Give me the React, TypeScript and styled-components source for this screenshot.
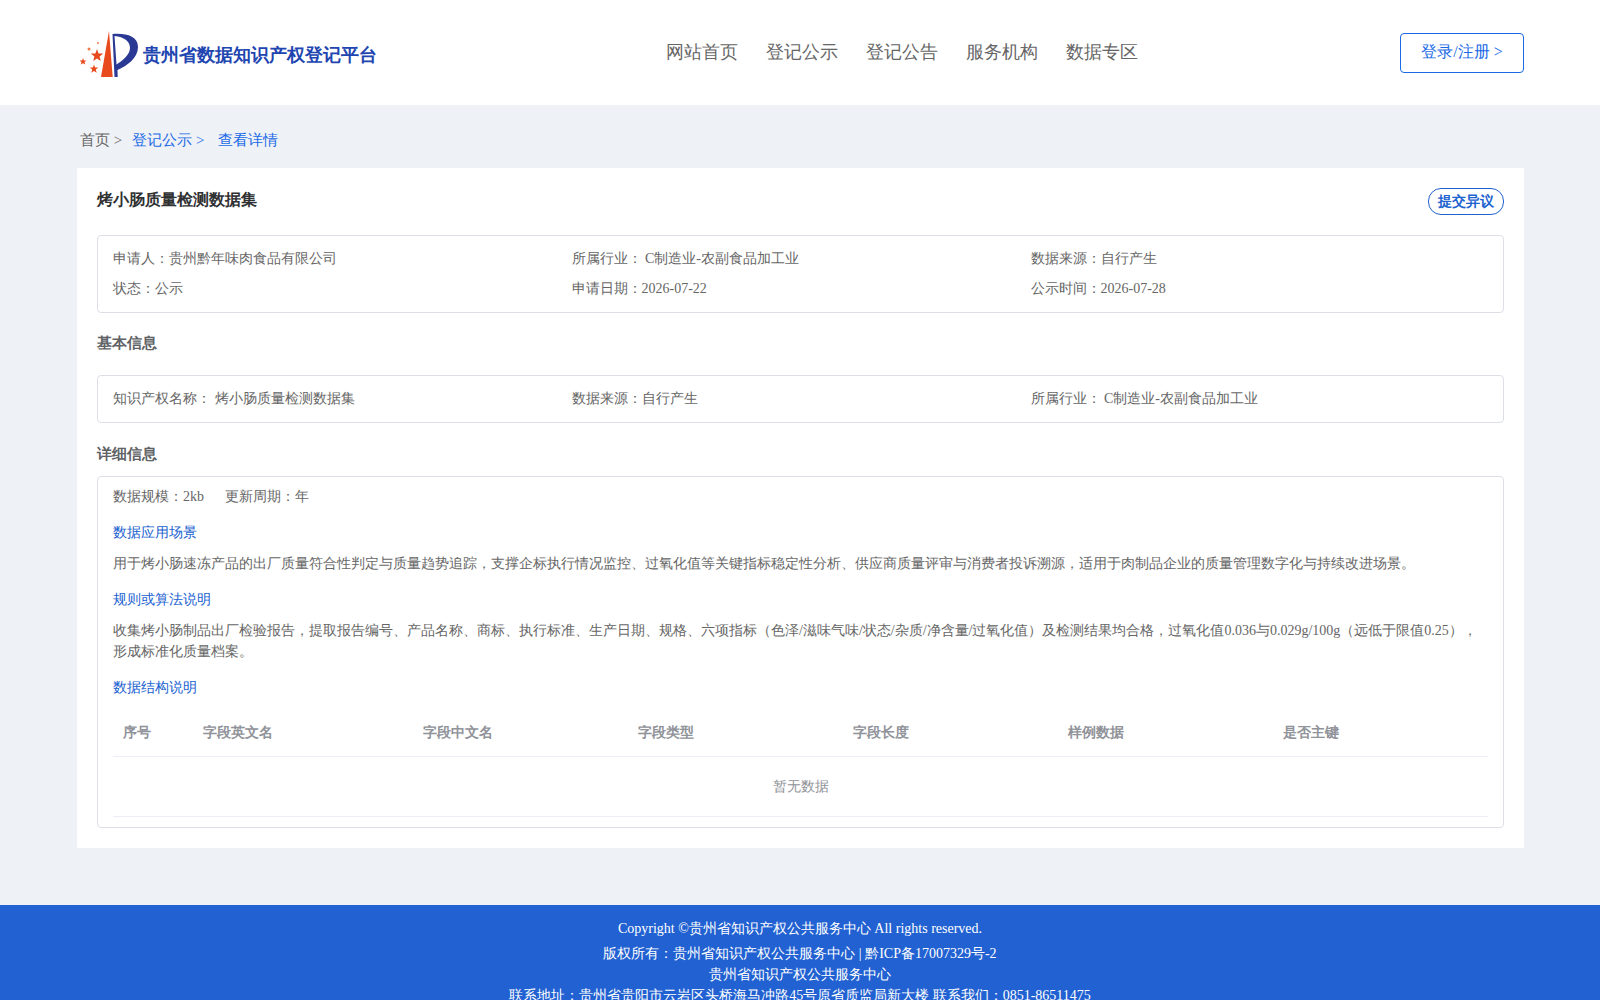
import React from "react";
import styled, { createGlobalStyle } from "styled-components";

const Global = createGlobalStyle`
  html, body { margin: 0; padding: 0; background: #eef1f5; }
  body { font-family: "Liberation Serif", serif; font-size: 14px; color: #666; }
  * { box-sizing: border-box; }
  p, h1, h2, h3 { margin: 0; }
`;

const Header = styled.header`
  height: 105px;
  background: #fff;
  padding: 0 76px 0 80px;
  display: flex;
  align-items: center;
`;
const Brand = styled.div`
  display: flex;
  align-items: center;
  gap: 5px;
  margin-top: 2px;
`;
const BrandName = styled.h1`
  font: bold 18px/24px "Liberation Sans", sans-serif;
  color: #2145b0;
  margin-top: 3px;
`;
const Nav = styled.nav`
  display: flex;
  gap: 28px;
  margin-left: 289px;
  margin-bottom: 1px;
`;
const NavItem = styled.a`
  font-size: 18px;
  line-height: 24px;
  color: #666;
`;
const LoginButton = styled.button`
  width: 124px;
  height: 40px;
  margin-left: auto;
  border: 1px solid #1a6ae6;
  border-radius: 4px;
  background: #fff;
  color: #1a6ae6;
  font: 16px "Liberation Serif", serif;
  padding: 0;
`;
const Main = styled.main`
  padding: 0 76px 0 77px;
`;
const Crumbs = styled.div`
  height: 63px;
  display: flex;
  align-items: center;
  padding: 8px 0 0 3px;
  font-size: 15px;
`;
const Crumb = styled.span<{ $active?: boolean; $gap?: number }>`
  color: ${(p) => (p.$active ? "#1a6ae6" : "#666")};
  margin-right: ${(p) => p.$gap ?? 0}px;
`;
const Card = styled.section`
  background: #fff;
  padding: 20px 20px 20px;
`;
const TitleRow = styled.div`
  display: flex;
  justify-content: space-between;
  align-items: flex-start;
  height: 47px;
`;
const Title = styled.h2`
  font: bold 16px/24px "Liberation Sans", sans-serif;
  color: #303133;
`;
const ObjectButton = styled.button`
  width: 76px;
  height: 27px;
  border: 1px solid #2061d0;
  border-radius: 13px;
  background: #fff;
  color: #2061d0;
  font: bold 14px "Liberation Sans", sans-serif;
  padding: 0;
`;
const Box = styled.div`
  border: 1px solid #dcdfe6;
  border-radius: 4px;
  padding: 0 15px;
`;
const InfoGrid = styled.div`
  display: grid;
  grid-template-columns: 458.5px 459px 1fr;
  padding: 8px 0;
`;
const InfoCell = styled.div`
  height: 30px;
  line-height: 30px;
`;
const SectionTitle = styled.h3`
  font: bold 15px/20px "Liberation Sans", sans-serif;
  color: #606266;
  margin: 20px 0 22px;
`;
const DetailTitle = styled(SectionTitle)`
  margin: 21px 0 12px;
`;
const MetaRow = styled.div`
  display: flex;
  gap: 21px;
  height: 20px;
  line-height: 20px;
  margin-top: 10px;
`;
const SubHead = styled.div`
  color: #2061d0;
  line-height: 20px;
  margin-top: 16px;
`;
const Para = styled.p`
  line-height: 21px;
  margin-top: 10px;
`;
const Table = styled.div`
  margin-top: 12px;
  padding-bottom: 10px;
`;
const Row = styled.div`
  display: grid;
  grid-template-columns: 80px 220px 215px 215px 215px 215px 1fr;
  height: 47px;
  align-items: center;
  border-bottom: 1px solid #ebeef5;
`;
const Th = styled.div`
  font: bold 14px "Liberation Sans", sans-serif;
  color: #909399;
  padding-left: 10px;
`;
const Empty = styled.div`
  height: 60px;
  line-height: 60px;
  text-align: center;
  color: #909399;
  border-bottom: 1px solid #ebeef5;
`;
const Footer = styled.footer`
  margin-top: 57px;
  background: #2161d2;
  color: #fff;
  text-align: center;
  padding: 14px 0 20px;
`;
const FooterLine = styled.div`
  line-height: 21px;
`;
const FooterCopy = styled(FooterLine)`
  line-height: 20px;
  margin-bottom: 4px;
`;

const Logo = () => (
  <svg width="58" height="52" viewBox="0 0 58 52" aria-hidden="true">
    <path d="M29 3 L32.7 49 L21 49 Z" fill="#e8491d" />
    <path
      fillRule="evenodd"
      d="M32.5 6 C46 5 58 8 58 19 C58 30 47 38 37.5 42 L37.7 49 L34.5 49 Z M34.5 8 C44 9 50 13 50 20 C50 27 42 33 36.5 36.5 Z"
      fill="#2a3a94"
    />
    <path d="M17 21 l1.6 4.4 4.6 .2 -3.6 2.9 1.2 4.5 -3.8 -2.6 -3.8 2.6 1.2 -4.5 -3.6 -2.9 4.6 -.2 Z" fill="#e8491d" />
    <path d="M3 30 l.9 2.4 2.6 .1 -2 1.6 .7 2.5 -2.2 -1.4 -2.2 1.4 .7 -2.5 -2 -1.6 2.6 -.1 Z" fill="#e8491d" />
    <path d="M14 36.5 l1.1 3 3.2 .1 -2.5 2 .9 3.1 -2.7 -1.8 -2.7 1.8 .9 -3.1 -2.5 -2 3.2 -.1 Z" fill="#e8491d" />
    <circle cx="9" cy="21" r="1.5" fill="#ef7a4a" />
    <circle cx="18" cy="15" r="1" fill="#ef7a4a" />
  </svg>
);

const navItems = ["网站首页", "登记公示", "登记公告", "服务机构", "数据专区"];
const headers = ["序号", "字段英文名", "字段中文名", "字段类型", "字段长度", "样例数据", "是否主键"];

export default function App() {
  return (
    <>
      <Global />
      <Header>
        <Brand>
          <Logo />
          <BrandName>贵州省数据知识产权登记平台</BrandName>
        </Brand>
        <Nav>
          {navItems.map((n) => (
            <NavItem key={n}>{n}</NavItem>
          ))}
        </Nav>
        <LoginButton>登录/注册 &gt;</LoginButton>
      </Header>
      <Main>
        <Crumbs>
          <Crumb $gap={10}>首页 &gt;</Crumb>
          <Crumb $active $gap={14}>登记公示 &gt;</Crumb>
          <Crumb $active>查看详情</Crumb>
        </Crumbs>
        <Card>
          <TitleRow>
            <Title>烤小肠质量检测数据集</Title>
            <ObjectButton>提交异议</ObjectButton>
          </TitleRow>
          <Box>
            <InfoGrid>
              <InfoCell>申请人：贵州黔年味肉食品有限公司</InfoCell>
              <InfoCell>所属行业： C制造业-农副食品加工业</InfoCell>
              <InfoCell>数据来源：自行产生</InfoCell>
              <InfoCell>状态：公示</InfoCell>
              <InfoCell>申请日期：2026-07-22</InfoCell>
              <InfoCell>公示时间：2026-07-28</InfoCell>
            </InfoGrid>
          </Box>
          <SectionTitle>基本信息</SectionTitle>
          <Box>
            <InfoGrid>
              <InfoCell>知识产权名称： 烤小肠质量检测数据集</InfoCell>
              <InfoCell>数据来源：自行产生</InfoCell>
              <InfoCell>所属行业： C制造业-农副食品加工业</InfoCell>
            </InfoGrid>
          </Box>
          <DetailTitle>详细信息</DetailTitle>
          <Box>
            <MetaRow>
              <span>数据规模：2kb</span>
              <span>更新周期：年</span>
            </MetaRow>
            <SubHead>数据应用场景</SubHead>
            <Para>用于烤小肠速冻产品的出厂质量符合性判定与质量趋势追踪，支撑企标执行情况监控、过氧化值等关键指标稳定性分析、供应商质量评审与消费者投诉溯源，适用于肉制品企业的质量管理数字化与持续改进场景。</Para>
            <SubHead>规则或算法说明</SubHead>
            <Para>收集烤小肠制品出厂检验报告，提取报告编号、产品名称、商标、执行标准、生产日期、规格、六项指标（色泽/滋味气味/状态/杂质/净含量/过氧化值）及检测结果均合格，过氧化值0.036与0.029g/100g（远低于限值0.25），形成标准化质量档案。</Para>
            <SubHead>数据结构说明</SubHead>
            <Table>
              <Row>
                {headers.map((h) => (
                  <Th key={h}>{h}</Th>
                ))}
              </Row>
              <Empty>暂无数据</Empty>
            </Table>
          </Box>
        </Card>
      </Main>
      <Footer>
        <FooterCopy>Copyright ©贵州省知识产权公共服务中心 All rights reserved.</FooterCopy>
        <FooterLine>版权所有：贵州省知识产权公共服务中心 | 黔ICP备17007329号-2</FooterLine>
        <FooterLine>贵州省知识产权公共服务中心</FooterLine>
        <FooterLine>联系地址：贵州省贵阳市云岩区头桥海马冲路45号原省质监局新大楼 联系我们：0851-86511475</FooterLine>
      </Footer>
    </>
  );
}
